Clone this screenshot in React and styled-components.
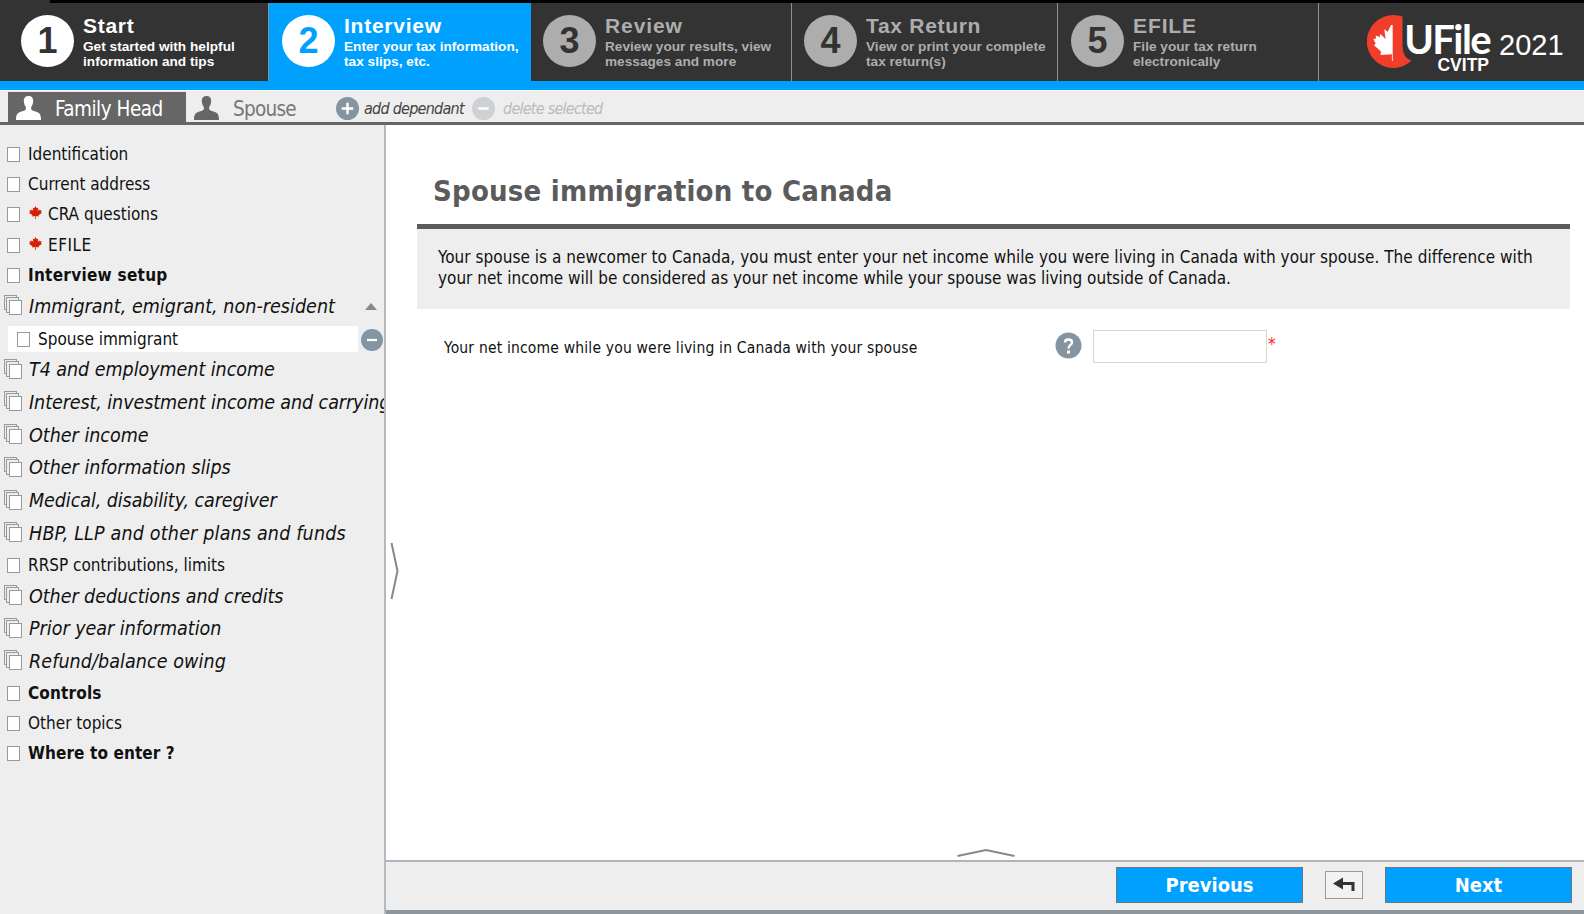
import React from 'react';
import styled, { createGlobalStyle, css } from 'styled-components';

const ui = "'DejaVu Sans Condensed', 'DejaVu Sans', sans-serif";
const arial = "'Liberation Sans', Arial, sans-serif";

const GlobalStyle = createGlobalStyle`
  * { box-sizing: border-box; }
  html, body { margin: 0; padding: 0; }
  body { font-family: ${ui}; font-stretch: condensed; color: #111; background: #fff; overflow: hidden; }
  button, input { font: inherit; }
`;

const Page = styled.div`
  display: flex;
  flex-direction: column;
  width: 1584px;
  height: 914px;
`;

const TopEdge = styled.div`
  height: 3px;
  flex: none;
  background: #000;
  border-left: 50px solid #333;
`;

const Header = styled.header`
  display: flex;
  flex: none;
  height: 87px;
  background: #333;
  border-bottom: 9px solid #00a0ff;
`;

const Step = styled.div`
  display: flex;
  flex: none;
  width: ${(p) => p.$width}px;
  padding: 12px 0 0 ${(p) => p.$pad}px;
  gap: 9px;
  color: ${(p) => (p.$tone === 'dim' ? '#adadad' : '#fff')};
  background: ${(p) => (p.$tone === 'active' ? '#00a0ff' : '#333')};
  border-right: ${(p) => (p.$tone === 'active' ? '0' : '1px solid #8a9299')};
  font-family: ${arial};
  font-weight: bold;
`;

const StepNumber = styled.div`
  width: 53px;
  height: 52px;
  flex: none;
  border-radius: 50%;
  background: ${(p) => (p.$tone === 'dim' ? '#adadad' : '#fff')};
  color: ${(p) => (p.$tone === 'active' ? '#00a0ff' : '#333')};
  font-size: 36px;
  line-height: 51px;
  text-align: center;
`;

const StepText = styled.div`
  white-space: nowrap;
`;

const StepTitle = styled.div`
  font-size: 21px;
  line-height: 22px;
  letter-spacing: ${(p) => p.$track}px;
`;

const StepInfo = styled.div`
  font-size: 13.6px;
  line-height: 15px;
  margin-top: 2px;
  letter-spacing: 0.03px;
`;

const Brand = styled.div`
  display: flex;
  padding: 10px 0 0 48px;
  color: #fff;
`;

const BrandMark = styled.svg`
  width: 46px;
  height: 56px;
  flex: none;
`;

const BrandWords = styled.div`
  display: flex;
  flex-direction: column;
  align-items: flex-end;
  width: 87px;
  margin: 5px 0 0 -10px;
`;

const BrandName = styled.div`
  font-family: Lato, ${arial};
  font-weight: bold;
  font-size: 40px;
  line-height: 42px;
  letter-spacing: -1.6px;
`;

const BrandSub = styled.div`
  font-family: ${arial};
  font-weight: bold;
  font-size: 17.5px;
  line-height: 18px;
  letter-spacing: 0;
  margin: -4px 1px 0 0;
`;

const BrandYear = styled.div`
  font-family: ${arial};
  font-size: 29px;
  line-height: 34px;
  margin: 15px 0 0 9px;
`;

const PeopleBar = styled.nav`
  display: flex;
  flex: none;
  height: 35px;
  padding: 1px 0 0 8px;
  background: #eee;
  border-top: 1px solid #f8fbff;
  border-bottom: 3px solid #666;
  white-space: nowrap;
`;

const Person = styled.div`
  display: flex;
  align-items: center;
  width: ${(p) => p.$width}px;
  padding: 3px 0 0 8px;
  gap: 14px;
  font-size: 20.5px;
  letter-spacing: ${(p) => p.$track}px;
  color: ${(p) => (p.$selected ? '#fff' : '#777')};
  background: ${(p) => (p.$selected ? '#666' : 'transparent')};

  svg {
    width: 25px;
    height: 24px;
    flex: none;
    margin-top: -1px;
    fill: ${(p) => (p.$selected ? '#fff' : '#666')};
  }
`;

const BarAction = styled.div`
  display: flex;
  align-items: center;
  gap: ${(p) => (p.$disabled ? 8 : 5)}px;
  width: ${(p) => p.$width}px;
  padding-top: 2px;
  color: ${(p) => (p.$disabled ? '#bbb' : '#444')};
  font-size: 16px;
  font-style: italic;
  letter-spacing: ${(p) => p.$track}px;

  svg { width: 23px; height: 23px; flex: none; }
`;

const Body = styled.div`
  display: flex;
  flex: 1;
  min-height: 0;
`;

const Sidebar = styled.aside`
  width: 386px;
  flex: none;
  padding-top: 13px;
  background: #eee;
  border-right: 2px solid #b4babf;
  overflow: hidden;
`;

const Row = styled.div`
  display: flex;
  align-items: center;
  height: 30.2px;
  padding-left: 7px;
  white-space: nowrap;
  font-size: 17px;
  font-weight: ${(p) => (p.$bold ? 'bold' : 'normal')};
  letter-spacing: ${(p) => p.$track}px;

  ${(p) =>
    p.$group &&
    css`
      height: 32.7px;
      padding: 2px 0 0 4px;
      font-size: 19.5px;
      font-style: italic;
    `}
`;

const RowText = styled.span`
  margin-left: ${(p) => (p.$group ? 7 : 8)}px;
  padding-top: ${(p) => (p.$group ? 0 : 2)}px;
`;

const SheetBox = styled.span`
  width: 13px;
  height: 15px;
  flex: none;
  margin-top: 3px;
  background: #fff;
  border: 1px solid #999;
`;

const StackSvg = styled.svg`
  width: 18px;
  height: 20px;
  flex: none;
  margin-top: -2px;
`;

const LeafSvg = styled.svg`
  width: 13px;
  height: 13px;
  margin: -1px -2px 0 9px;
`;

const Collapse = styled.span`
  margin-left: auto;
  margin-right: 7px;
  border: 6px solid transparent;
  border-top: 0;
  border-bottom: 7px solid #888;
`;

const SubRow = styled.div`
  display: flex;
  align-items: center;
  height: 30.8px;
  padding: 4px 0 0 8px;
  gap: 3px;

  svg { width: 22px; height: 22px; flex: none; margin-top: 2px; }
`;

const SubLabel = styled.div`
  display: flex;
  align-items: center;
  width: 350px;
  height: 26px;
  padding: 0 0 2px 9px;
  background: #fff;
  font-size: 17px;
`;

const Main = styled.main`
  display: flex;
  flex-direction: column;
  flex: 1;
  min-width: 0;
`;

const Work = styled.section`
  display: flex;
  flex: 1;
`;

const SideHandle = styled.svg`
  width: 10px;
  height: 60px;
  flex: none;
  margin: 416px 0 0 4px;
`;

const Form = styled.div`
  display: flex;
  flex-direction: column;
  width: 1153px;
  margin-left: 17px;
`;

const Heading = styled.h1`
  margin: 0;
  padding: 48px 0 0 16px;
  height: 99px;
  font-size: 29px;
  line-height: 36px;
  letter-spacing: 0.22px;
  color: #5b5b5b;
`;

const Notice = styled.div`
  height: 85px;
  padding: 18px 0 0 21px;
  border-top: 5px solid #5b5b5b;
  background: #eee;
  font-size: 17px;
  line-height: 21px;
  white-space: nowrap;
`;

const NoticeLine = styled.div`
  letter-spacing: ${(p) => p.$track}px;
`;

const Field = styled.div`
  display: flex;
  align-items: center;
  margin-top: 20px;
  padding-left: 27px;
  height: 34px;
`;

const FieldLabel = styled.label`
  width: 611px;
  padding-top: 3px;
  font-size: 15.5px;
  letter-spacing: 0.18px;
  white-space: nowrap;
`;

const HelpSvg = styled.svg`
  width: 27px;
  height: 27px;
  margin-top: -2px;
`;

const Amount = styled.input`
  width: 174px;
  height: 33px;
  margin-left: 11px;
  padding: 0 6px;
  border: 1px solid #d6d6d6;
  background: #fff;
`;

const Required = styled.span`
  margin: -5px 0 0 1px;
  color: #f22;
  font-size: 17px;
`;

const PanelHandle = styled.svg`
  width: 60px;
  height: 10px;
  flex: none;
  margin: auto 0 2px 539px;
`;

const Footer = styled.footer`
  display: flex;
  align-items: center;
  justify-content: flex-end;
  flex: none;
  gap: 22px;
  height: 54px;
  padding: 0 12px 2px 0;
  background: #eee;
  border-top: 2px solid #adb5ba;
  border-bottom: 4px solid #8c969e;
`;

const NavButton = styled.button`
  width: 187px;
  height: 36px;
  padding: 0;
  border: 1px solid #6d777e;
  background: #00a0ff;
  color: #fff;
  font-size: 20px;
  font-weight: bold;
`;

const BackButton = styled.button`
  display: flex;
  align-items: center;
  justify-content: center;
  width: 38px;
  height: 28px;
  padding: 0;
  border: 1px solid #999;
  background: #f2f2f2;
`;

const LEAF =
  'M12 0 L14.3 4.3 L17 3 L16 9 L19 6.2 L19.8 8.2 L23.2 7.6 L22 11 L24 12.3 L17.6 17.2 L18.2 19.4 L12.6 18.6 L12.7 24 L11.3 24 L11.4 18.6 L5.8 19.4 L6.4 17.2 L0 12.3 L2 11 L0.8 7.6 L4.2 8.2 L5 6.2 L8 9 L7 3 L9.7 4.3 Z';

const Leaf = () => (
  <LeafSvg viewBox="0 0 24 24">
    <path d={LEAF} fill="#d81e05" />
  </LeafSvg>
);

const PersonIcon = () => (
  <svg viewBox="0 0 25 24">
    <path d="M12.5 0C15.8 0 17.4 2 17.2 5C17.1 7.6 16.2 9.5 15.2 11V13.5C16 14.6 19 15.2 21.5 16.2C24 17.3 25 19 25 24H0C0 19 1 17.3 3.5 16.2C6 15.2 9 14.6 9.8 13.5V11C8.8 9.5 7.9 7.6 7.8 5C7.6 2 9.2 0 12.5 0Z" />
  </svg>
);

const StackIcon = () => (
  <StackSvg viewBox="0 0 18 20" fill="#eee" stroke="#999">
    <rect x="0.5" y="0.5" width="12" height="14" />
    <rect x="2.5" y="2.5" width="12" height="15" />
    <rect x="5.5" y="5.5" width="12" height="14" fill="#fff" />
  </StackSvg>
);

const RoundSign = ({ plus, color = '#8494a0' }) => (
  <svg viewBox="0 0 22 22">
    <circle cx="11" cy="11" r="11" fill={color} />
    <path d={plus ? 'M5.5 11h11M11 5.5v11' : 'M6 11h10'} stroke="#fff" strokeWidth="2.3" />
  </svg>
);

const steps = [
  { n: 1, title: 'Start', info: ['Get started with helpful', 'information and tips'], width: 269, pad: 21, tone: 'done', track: 0.7 },
  { n: 2, title: 'Interview', info: ['Enter your tax information,', 'tax slips, etc.'], width: 262, pad: 13, tone: 'active', track: 0.75 },
  { n: 3, title: 'Review', info: ['Review your results, view', 'messages and more'], width: 261, pad: 12, tone: 'dim', track: 0.9 },
  { n: 4, title: 'Tax Return', info: ['View or print your complete', 'tax return(s)'], width: 266, pad: 12, tone: 'dim', track: 0.7 },
  { n: 5, title: 'EFILE', info: ['File your tax return', 'electronically'], width: 261, pad: 13, tone: 'dim', track: 0.9 },
];

const topics = [
  { text: 'Identification', track: 0 },
  { text: 'Current address', track: 0 },
  { text: 'CRA questions', leaf: true, track: 0 },
  { text: 'EFILE', leaf: true, track: 0.5 },
  { text: 'Interview setup', bold: true, track: 0.27 },
  { text: 'Immigrant, emigrant, non-resident', group: true, open: 'Spouse immigrant', track: 0.04 },
  { text: 'T4 and employment income', group: true, track: -0.04 },
  { text: 'Interest, investment income and carrying charges', group: true, track: -0.08 },
  { text: 'Other income', group: true, track: 0 },
  { text: 'Other information slips', group: true, track: 0 },
  { text: 'Medical, disability, caregiver', group: true, track: -0.07 },
  { text: 'HBP, LLP and other plans and funds', group: true, track: 0.18 },
  { text: 'RRSP contributions, limits', track: 0 },
  { text: 'Other deductions and credits', group: true, track: -0.05 },
  { text: 'Prior year information', group: true, track: 0 },
  { text: 'Refund/balance owing', group: true, track: 0.08 },
  { text: 'Controls', bold: true, track: 0.15 },
  { text: 'Other topics', track: 0 },
  { text: 'Where to enter ?', bold: true, track: 0.1 },
];

const Topic = ({ text, group, bold, leaf, open, track }) => (
  <>
    <Row $group={group} $bold={bold} $track={track}>
      {group ? <StackIcon /> : <SheetBox />}
      {leaf && <Leaf />}
      <RowText $group={group}>{text}</RowText>
      {open && <Collapse />}
    </Row>
    {open && (
      <SubRow>
        <SubLabel>
          <SheetBox />
          <RowText>{open}</RowText>
        </SubLabel>
        <RoundSign />
      </SubRow>
    )}
  </>
);

export default function App() {
  return (
    <Page>
      <GlobalStyle />
      <TopEdge />
      <Header>
        {steps.map((s) => (
          <Step key={s.n} $width={s.width} $pad={s.pad} $tone={s.tone}>
            <StepNumber $tone={s.tone}>{s.n}</StepNumber>
            <StepText>
              <StepTitle $track={s.track}>{s.title}</StepTitle>
              <StepInfo>
                {s.info[0]}
                <br />
                {s.info[1]}
              </StepInfo>
            </StepText>
          </Step>
        ))}
        <Brand>
          <BrandMark viewBox="0 0 46 56">
            <path d="M35.5 3.6A26.5 26.5 0 1 0 44.7 47.6Q35.5 45 35.5 33Z" fill="#f03e2b" />
            <path
              d="M25.7 12H24.2L20.7 18.7L17.3 16.2L18.6 26L13.5 21L12.5 24L8.7 22.5L9 25.5L6.3 26L8.7 30.5L7 32.3L14 38.5L13.5 42L24.9 41.3V48H25.7Z"
              fill="#fff"
            />
          </BrandMark>
          <BrandWords>
            <BrandName>UFile</BrandName>
            <BrandSub>CVITP</BrandSub>
          </BrandWords>
          <BrandYear>2021</BrandYear>
        </Brand>
      </Header>
      <PeopleBar>
        <Person $selected $width={178} $track={-0.5}>
          <PersonIcon />
          Family Head
        </Person>
        <Person $width={150} $track={-0.75}>
          <PersonIcon />
          Spouse
        </Person>
        <BarAction $width={136} $track={-0.75}>
          <RoundSign plus />
          add dependant
        </BarAction>
        <BarAction $disabled $width={140} $track={-0.75}>
          <RoundSign color="#cdd1d4" />
          delete selected
        </BarAction>
      </PeopleBar>
      <Body>
        <Sidebar>
          {topics.map((topic) => (
            <Topic key={topic.text} {...topic} />
          ))}
        </Sidebar>
        <Main>
          <Work>
            <SideHandle viewBox="0 0 10 60" fill="none" stroke="#888" strokeWidth="2">
              <path d="M1.5 2L7.5 30L1.5 58" />
            </SideHandle>
            <Form>
              <Heading>Spouse immigration to Canada</Heading>
              <Notice>
                <NoticeLine $track={0.045}>
                  Your spouse is a newcomer to Canada, you must enter your net income while you were living in Canada with your spouse. The difference with
                </NoticeLine>
                <NoticeLine $track={0}>
                  your net income will be considered as your net income while your spouse was living outside of Canada.
                </NoticeLine>
              </Notice>
              <Field>
                <FieldLabel htmlFor="net">Your net income while you were living in Canada with your spouse</FieldLabel>
                <HelpSvg viewBox="0 0 27 27">
                  <circle cx="13.5" cy="13.5" r="13" fill="#8494a0" />
                  <path d="M10 10.5C10 6.5 17 6.5 17 10.5C17 13 13.5 13 13.5 16.5" fill="none" stroke="#fff" strokeWidth="2.4" />
                  <rect x="12" y="18.5" width="3" height="3" fill="#fff" />
                </HelpSvg>
                <Amount id="net" />
                <Required>*</Required>
              </Field>
              <PanelHandle viewBox="0 0 60 10" fill="none" stroke="#888" strokeWidth="2">
                <path d="M1.5 8L30 2L58.5 8" />
              </PanelHandle>
            </Form>
          </Work>
          <Footer>
            <NavButton>Previous</NavButton>
            <BackButton>
              <svg width="24" height="16" viewBox="0 0 24 16">
                <path d="M1 6.5L11 0.5V12.5Z" fill="#333" />
                <path d="M10 6.5H21V14" fill="none" stroke="#333" strokeWidth="3" />
              </svg>
            </BackButton>
            <NavButton>Next</NavButton>
          </Footer>
        </Main>
      </Body>
    </Page>
  );
}
